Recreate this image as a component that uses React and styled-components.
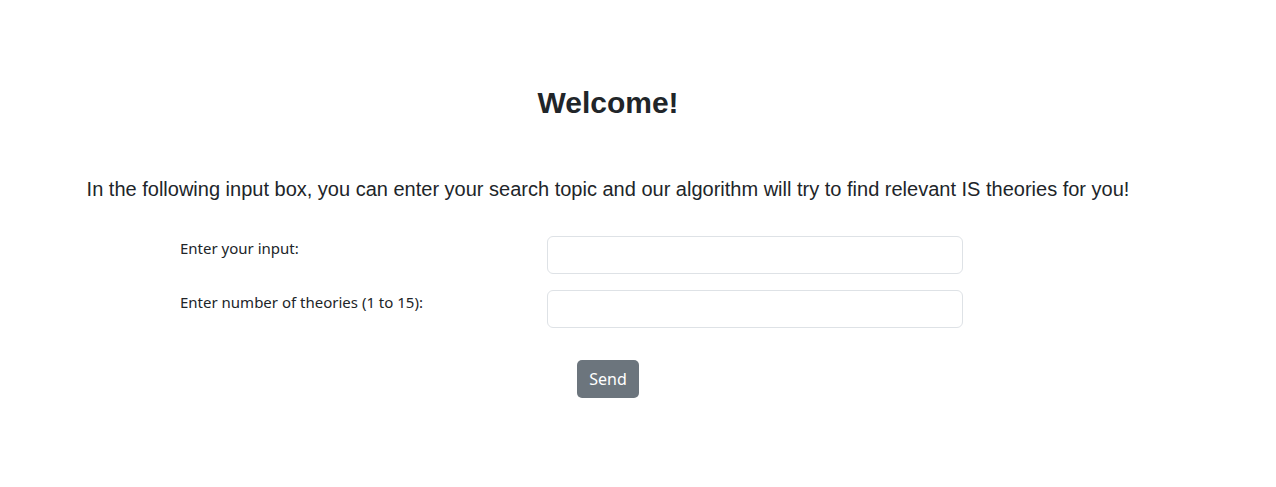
import React from "react";
import styled, { createGlobalStyle } from "styled-components";

const Global = createGlobalStyle`
  html, body { margin: 0; padding: 0; background: #fff; }
  body { font-family: "Liberation Sans", Arial, sans-serif; color: #212529; }
  * { box-sizing: border-box; }
`;

const Page = styled.main`
  width: 1216px;
  padding-top: 84px;
  display: flex;
  flex-direction: column;
  align-items: center;
`;

const Title = styled.h1`
  margin: 0;
  font-family: "Liberation Sans", Arial, sans-serif;
  font-weight: 700;
  font-size: 30px;
  line-height: 38px;
  color: #212529;
`;

const Intro = styled.p`
  margin: 55px 0 0;
  font-family: "Liberation Sans", Arial, sans-serif;
  font-size: 20px;
  line-height: 24px;
  color: #212529;
`;

const Form = styled.form`
  align-self: flex-start;
  margin: 35px 0 0 180px;
  display: grid;
  grid-template-columns: 367px 416px;
  row-gap: 16px;
`;

const Label = styled.label`
  font-family: "Segoe UI", "Noto Sans", sans-serif;
  font-size: 15px;
  line-height: 20px;
  padding-top: 2px;
  color: #212529;
`;

const Input = styled.input`
  height: 38px;
  width: 416px;
  border: 1px solid #dee2e6;
  border-radius: 6px;
  background: #fff;
  padding: 6px 12px;
  font-size: 16px;
  outline: none;
`;

const Button = styled.button`
  margin-top: 32px;
  height: 38px;
  padding: 0 12px;
  border: none;
  border-radius: 5px;
  background: #6c757d;
  color: #fff;
  font-family: "Segoe UI", "Noto Sans", sans-serif;
  font-size: 16px;
  cursor: pointer;
`;

export default function App() {
  return (
    <>
      <Global />
      <Page>
        <Title>Welcome!</Title>
        <Intro>
          In the following input box, you can enter your search topic and our algorithm will try to find relevant IS theories for you!
        </Intro>
        <Form onSubmit={(e) => e.preventDefault()}>
          <Label htmlFor="topic">Enter your input:</Label>
          <Input id="topic" type="text" />
          <Label htmlFor="count">Enter number of theories (1 to 15):</Label>
          <Input id="count" type="text" />
        </Form>
        <Button type="button">Send</Button>
      </Page>
    </>
  );
}
